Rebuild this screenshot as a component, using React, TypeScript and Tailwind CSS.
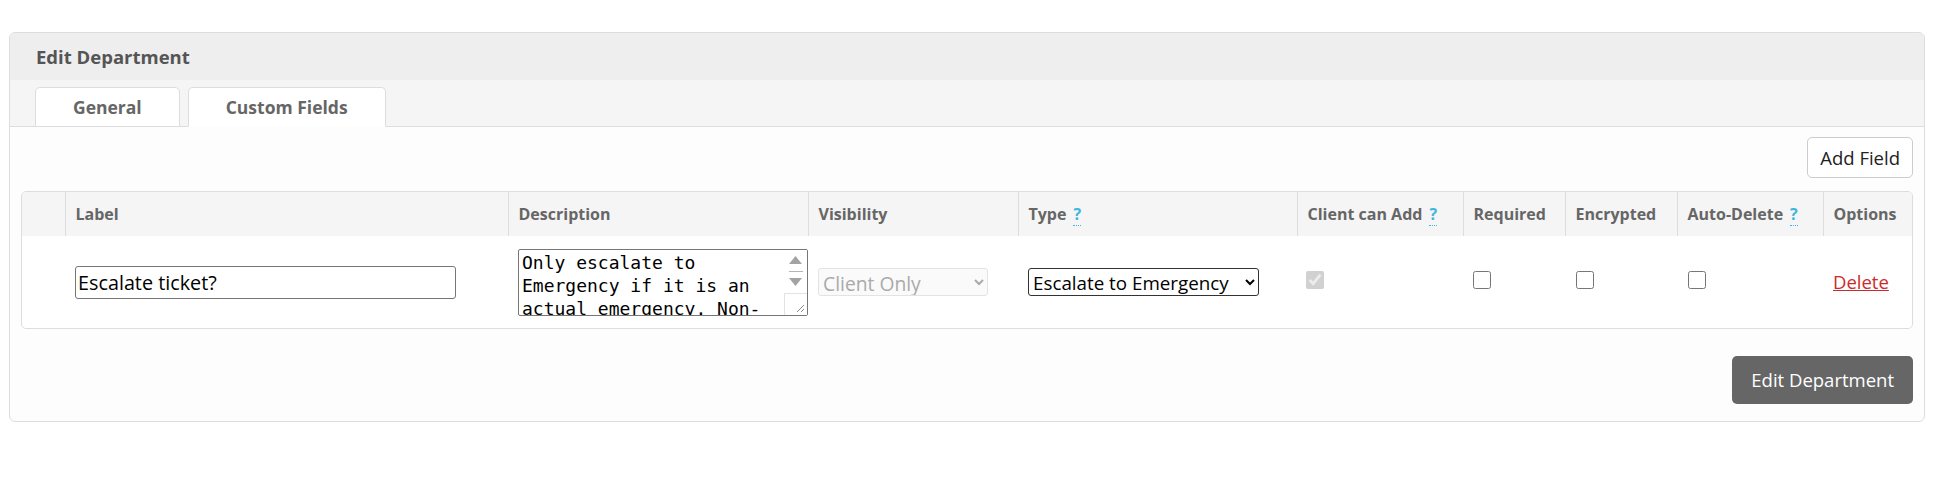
import { useState } from 'react';

const font = { fontFamily: '"Open Sans", "Noto Sans", sans-serif' };

const columns = [
  { label: '', width: 'w-[43px]' },
  { label: 'Label', width: 'w-[443px]' },
  { label: 'Description', width: 'w-[300px]' },
  { label: 'Visibility', width: 'w-[210px]' },
  { label: 'Type', width: 'w-[279px]', help: true },
  { label: 'Client can Add', width: 'w-[166px]', help: true },
  { label: 'Required', width: 'w-[102px]' },
  { label: 'Encrypted', width: 'w-[112px]' },
  { label: 'Auto-Delete', width: 'w-[146px]', help: true },
  { label: 'Options', width: 'w-[91px]' },
];

function Help() {
  return (
    <span className="ml-[7px] cursor-help border-b border-dotted border-[#3fb6e0] text-[#3fb6e0]">?</span>
  );
}

// textarea scrollbar look (arrows + resize corner)
function FakeScrollbar() {
  return (
    <div className="pointer-events-none absolute top-px right-px bottom-px flex w-[23px] flex-col bg-white">
      <div className="flex h-[21px] items-center justify-center">
        <svg width="13" height="8" viewBox="0 0 13 8">
          <path d="M6.5 0 L13 8 L0 8 Z" fill="#a3a3a3" />
        </svg>
      </div>
      <div className="mx-auto w-[14px] border-t border-[#b5b5b5]" />
      <div className="flex h-[21px] items-center justify-center">
        <svg width="13" height="8" viewBox="0 0 13 8">
          <path d="M0 0 L13 0 L6.5 8 Z" fill="#a3a3a3" />
        </svg>
      </div>
      <div className="relative flex-1 border-t border-l border-[#e3e3e3]">
        <svg className="absolute right-[2px] bottom-[2px]" width="9" height="9" viewBox="0 0 9 9">
          <path d="M1 8 L8 1 M5 8 L8 5" stroke="#8a8a8a" strokeWidth="1" />
        </svg>
      </div>
    </div>
  );
}

export default function App() {
  const [tab, setTab] = useState('custom');
  const [label, setLabel] = useState('Escalate ticket?');
  const [desc, setDesc] = useState(
    'Only escalate to Emergency if it is an actual emergency. Non-emergency tickets that are escalated will be moved back to the normal queue.'
  );
  const [type, setType] = useState('escalate');
  const [required, setRequired] = useState(false);
  const [encrypted, setEncrypted] = useState(false);
  const [autoDelete, setAutoDelete] = useState(false);

  return (
    <div className="min-h-[502px] bg-white pt-[32px] pl-[9px] pr-[20px]" style={font}>
      <div className="overflow-hidden rounded-md border border-[#dddddd] bg-[#fdfdfd]">
        <div className="flex h-[47px] items-center bg-[#eeeeee] px-[26px] text-[18.5px] font-bold text-[#555555]">
          Edit Department
        </div>

        <div className="flex h-[47px] items-end gap-[8px] border-b border-[#dddddd] bg-[#f5f5f5] px-[25px]">
          <button
            onClick={() => setTab('general')}
            className={`-mb-px h-[40px] rounded-t-[5px] border border-[#dddddd] bg-white px-[37px] text-[17.5px] font-bold text-[#666666] ${
              tab === 'general' ? 'border-b-white' : ''
            }`}
          >
            General
          </button>
          <button
            onClick={() => setTab('custom')}
            className={`-mb-px h-[40px] rounded-t-[5px] border border-[#dddddd] bg-white px-[37px] text-[17.5px] font-bold text-[#666666] ${
              tab === 'custom' ? 'border-b-white' : ''
            }`}
          >
            Custom Fields
          </button>
        </div>

        <div className="px-[11px] pt-[10px] pb-[17px]">
          <div className="flex justify-end">
            <button className="h-[41px] rounded-[5px] border border-[#cccccc] bg-white px-[12px] text-[18.5px] text-[#222222]">
              Add Field
            </button>
          </div>

          <div className="mt-[13px] overflow-hidden rounded-[5px] border border-[#dddddd] bg-white">
            <table className="w-full table-fixed border-collapse">
              <colgroup>
                {columns.map((c, i) => (
                  <col key={i} className={c.width} />
                ))}
              </colgroup>
              <thead>
                <tr className="h-[44px] bg-[#f5f5f5]">
                  {columns.map((c, i) => (
                    <th
                      key={i}
                      className={`px-[10px] text-left align-middle text-[16px] font-bold whitespace-nowrap text-[#666666] ${
                        i > 0 ? 'border-l border-[#dddddd]' : ''
                      }`}
                    >
                      {c.label}
                      {c.help && <Help />}
                    </th>
                  ))}
                </tr>
              </thead>
              <tbody>
                <tr className="h-[92px]">
                  <td />
                  <td className="px-[10px] align-middle">
                    <input
                      value={label}
                      onChange={(e) => setLabel(e.target.value)}
                      className="h-[33px] w-[381px] rounded-[3px] border border-[#767676] px-[2px] text-[19.8px] text-black"
                    />
                  </td>
                  <td className="pl-[10px] align-middle">
                    <div className="relative w-[290px]">
                      <textarea
                        value={desc}
                        onChange={(e) => setDesc(e.target.value)}
                        className="block h-[67px] w-full resize-none overflow-hidden rounded-[2px] border border-[#767676] py-[1px] pr-[25px] pl-[3px] text-[18px] leading-[23px] text-black"
                        style={{ fontFamily: '"DejaVu Sans Mono", "Liberation Mono", monospace' }}
                      />
                      <FakeScrollbar />
                    </div>
                  </td>
                  <td className="pl-[10px] align-middle">
                    <select
                      disabled
                      className="h-[28px] w-[170px] rounded-[3px] border border-[#e3e3e3] bg-[#fafafa] text-[19.3px] text-[#aaaaaa]"
                    >
                      <option>Client Only</option>
                    </select>
                  </td>
                  <td className="pl-[10px] align-middle">
                    <select
                      value={type}
                      onChange={(e) => setType(e.target.value)}
                      className="h-[28px] w-[231px] rounded-[3px] border border-[#333333] bg-white text-[18.8px] text-black"
                    >
                      <option value="text">Text Box</option>
                      <option value="escalate">Escalate to Emergency</option>
                    </select>
                  </td>
                  <td className="pl-[9px] align-middle">
                    <input type="checkbox" checked disabled readOnly className="mb-[4px] block h-[18px] w-[18px]" />
                  </td>
                  <td className="pl-[10px] align-middle">
                    <input
                      type="checkbox"
                      checked={required}
                      onChange={(e) => setRequired(e.target.checked)}
                      className="mb-[4px] block h-[18px] w-[18px]"
                    />
                  </td>
                  <td className="pl-[11px] align-middle">
                    <input
                      type="checkbox"
                      checked={encrypted}
                      onChange={(e) => setEncrypted(e.target.checked)}
                      className="mb-[4px] block h-[18px] w-[18px]"
                    />
                  </td>
                  <td className="pl-[11px] align-middle">
                    <input
                      type="checkbox"
                      checked={autoDelete}
                      onChange={(e) => setAutoDelete(e.target.checked)}
                      className="mb-[4px] block h-[18px] w-[18px]"
                    />
                  </td>
                  <td className="pl-[10px] align-middle">
                    <a href="#" className="text-[18.5px] text-[#cc2b2b] underline">
                      Delete
                    </a>
                  </td>
                </tr>
              </tbody>
            </table>
          </div>

          <div className="mt-[27px] flex justify-end">
            <button className="h-[48px] rounded-[5px] bg-[#666666] px-[19px] text-[18.5px] text-white">
              Edit Department
            </button>
          </div>
        </div>
      </div>
    </div>
  );
}
